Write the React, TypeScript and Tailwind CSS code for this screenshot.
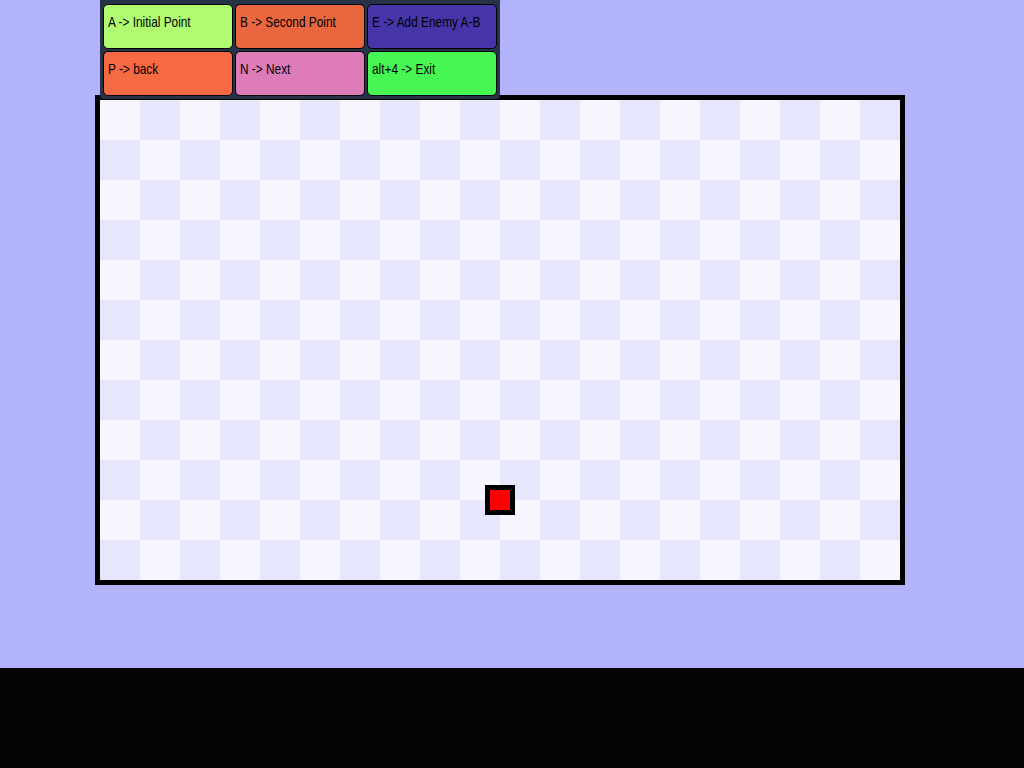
import React from 'react';

const buttons = [
  { label: 'A -> Initial Point', color: 'bg-[#b0fc70]' },
  { label: 'B -> Second Point', color: 'bg-[#e8673f]' },
  { label: 'E -> Add Enemy A-B', color: 'bg-[#4535a8]' },
  { label: 'P -> back', color: 'bg-[#f56a43]' },
  { label: 'N -> Next', color: 'bg-[#de7cb9]' },
  { label: 'alt+4 -> Exit', color: 'bg-[#47f553]' },
];

const COLS = 20;
const ROWS = 12;

export default function App() {
  const cells = [];
  for (let r = 0; r < ROWS; r++) {
    for (let c = 0; c < COLS; c++) {
      const light = (r + c) % 2 === 0;
      cells.push(
        <div key={`${r}-${c}`} className={light ? 'bg-[#f7f6fe]' : 'bg-[#e6e6fd]'} />
      );
    }
  }

  return (
    <div className="w-[1024px] h-[768px] flex flex-col overflow-hidden font-['Liberation_Sans',Arial,sans-serif]">
      <div className="h-[668px] bg-[#b3b3fb] flex flex-col">
        {/* toolbar */}
        <div className="relative z-10 ml-[100px] w-[400px] h-[99px] bg-[#253247] rounded-b-[4px] pl-[3px] pt-[4px] grid grid-cols-[130px_130px_130px] grid-rows-[45px_45px] gap-x-[2px] gap-y-[2px]">
          {buttons.map((b) => (
            <div
              key={b.label}
              className={`${b.color} border border-black rounded-[5px] pl-[4px] pt-[8px] text-[15px] leading-[17px] text-black whitespace-nowrap overflow-hidden`}
            >
              <span className="inline-block origin-left scale-x-[0.79]">{b.label}</span>
            </div>
          ))}
        </div>

        {/* board */}
        <div className="relative ml-[95px] -mt-[4px] w-[810px] h-[490px] border-[5px] border-black">
          <div className="grid grid-cols-[repeat(20,40px)] grid-rows-[repeat(12,40px)]">
            {cells}
          </div>
          <div className="absolute left-[385px] top-[385px] w-[30px] h-[30px] border-[5px] border-black bg-[#ff0000]" />
        </div>
      </div>
      <div className="flex-1 bg-[#050505]" />
    </div>
  );
}
